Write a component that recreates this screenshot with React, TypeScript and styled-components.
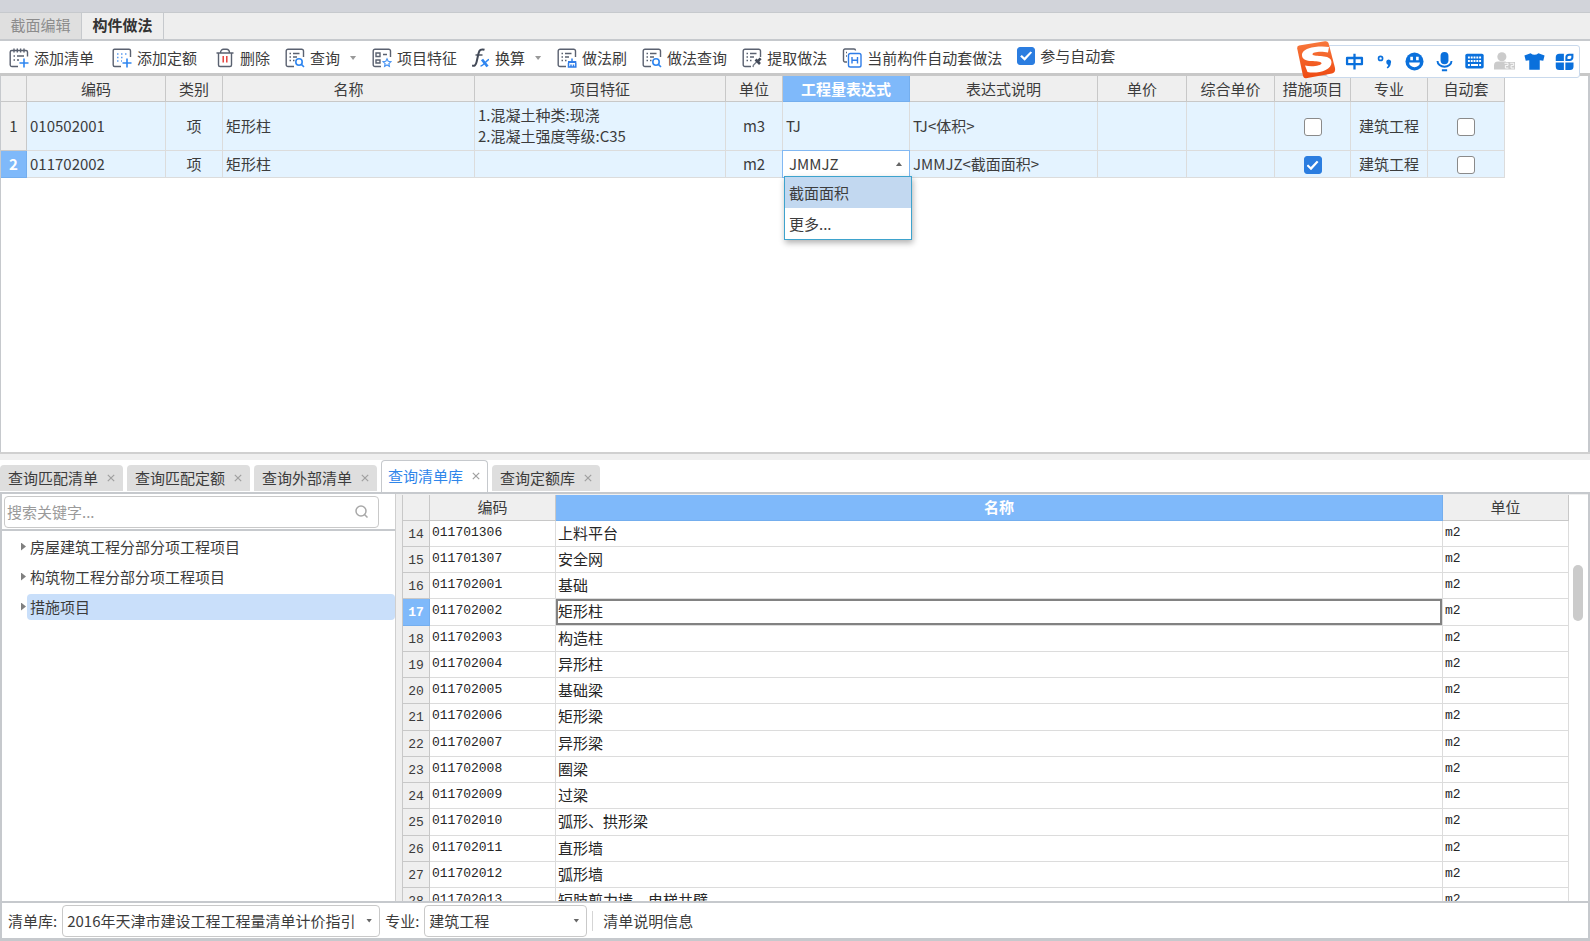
import React, { useState } from "react";
import styled, { createGlobalStyle, css } from "styled-components";

const GlobalStyle = createGlobalStyle`
  * { box-sizing: border-box; }
  body {
    margin: 0;
    background: #efefef;
    color: #3c3c3c;
    font: 15px/20px "Noto Sans CJK SC", sans-serif;
  }
  button, input, select { font: inherit; color: inherit; }
`;

const line = "#c6c9cd";
const grid = "#dcdcdc";
const headLine = "#c8c8c8";
const accent = "#7fb9fa";

const Window = styled.div`
  display: flex;
  flex-direction: column;
  height: 100vh;
  min-height: 640px;
  overflow: hidden;
`;

const TitleStrip = styled.div`
  flex: none;
  height: 12px;
  background: #d2d4da;
`;

const UpperPane = styled.section`
  flex: 442 1 0;
  min-height: 0;
  display: flex;
  flex-direction: column;
  border-bottom: 2px solid #d0d0d0;
`;

const PageTabs = styled.div`
  flex: none;
  display: flex;
  height: 29px;
  border-top: 1px solid ${line};
  border-bottom: 2px solid ${line};
  background: #eee;
`;

const PageTab = styled.button<{ $active?: boolean }>`
  width: 82px;
  padding: 0 0 2px;
  border: 0;
  border-right: 1px solid ${line};
  background: ${(p) => (p.$active ? "#eee" : "#dfdfdf")};
  color: ${(p) => (p.$active ? "#333" : "#8c8c8c")};
  font-weight: ${(p) => (p.$active ? 700 : 400)};
`;

const ToolbarRow = styled.div`
  position: relative;
  flex: none;
  display: flex;
  align-items: center;
  gap: 15px;
  height: 35px;
  padding: 0 9px;
  border-bottom: 3px solid ${headLine};
  background: #fff;
`;

const ToolGroup = styled.div`
  display: flex;
  gap: 18px;
`;

const ToolButton = styled.button`
  flex: none;
  display: flex;
  align-items: center;
  gap: 5px;
  padding: 2px 0 0;
  border: 0;
  background: none;
  white-space: nowrap;
`;

const Caret = styled.span<{ $up?: boolean; $dark?: boolean }>`
  flex: none;
  width: 8px;
  height: 4px;
  background: ${(p) => (p.$dark ? "#666" : "#999")};
  clip-path: ${(p) =>
    p.$up ? "polygon(12% 100%, 50% 0, 88% 100%)" : "polygon(12% 0, 88% 0, 50% 100%)"};
`;

const ToolCaret = styled(Caret)`
  margin-left: 4px;
`;

const CheckLabel = styled.label`
  flex: none;
  display: flex;
  align-items: center;
  gap: 5px;
  padding-bottom: 2px;
`;

const Check = styled.input.attrs({ type: "checkbox" })`
  appearance: none;
  display: inline-grid;
  place-items: center;
  width: 18px;
  height: 18px;
  margin: 0;
  border: 1px solid #8a8a8a;
  border-radius: 3px;
  background: #fff;
  vertical-align: middle;
  &:checked {
    border-color: #2b7de0;
    background: #2b7de0;
  }
  &:checked::after {
    content: "";
    width: 12px;
    height: 10px;
    background: #fff;
    clip-path: polygon(0 54%, 14% 40%, 36% 66%, 86% 4%, 100% 16%, 38% 98%);
  }
`;

const ImeBar = styled.div`
  position: absolute;
  z-index: 2;
  top: 4px;
  right: 10px;
  display: flex;
  align-items: center;
  gap: 6px;
  height: 33px;
  padding: 0 3px;
  border: 1px solid #c9d9ec;
  border-radius: 3px;
  background: #fff;
`;

const ImeLogo = styled.button`
  width: 40px;
  height: 40px;
  margin: 0 0 4px -34px;
  padding: 0;
  border: 0;
  background: none;
`;

const ImeButton = styled.button`
  display: grid;
  place-items: center;
  width: 24px;
  height: 24px;
  padding: 0;
  border: 0;
  background: none;
`;

const UpperBody = styled.div`
  flex: 1;
  min-height: 0;
  overflow: hidden;
  border: solid ${line};
  border-width: 0 2px 0 1px;
  background: #fff;
`;

const cell = css`
  height: 27px;
  border: solid ${grid};
  border-width: 0 1px 1px 0;
  font-weight: 400;
`;

const ItemTable = styled.table`
  width: 1504px;
  table-layout: fixed;
  border-collapse: separate;
  border-spacing: 0;
`;

const HeadCell = styled.th<{ $active?: boolean }>`
  ${cell}
  height: 26px;
  padding: 0;
  border-color: ${(p) => (p.$active ? "#74aeee" : headLine)};
  background: ${(p) => (p.$active ? accent : "#efefef")};
  color: ${(p) => (p.$active ? "#fff" : "inherit")};
  font-weight: ${(p) => (p.$active ? 700 : 400)};
`;

const RowHead = styled.th<{ $active?: boolean }>`
  ${cell}
  padding: 0;
  border-color: ${(p) => (p.$active ? "#74aeee" : headLine)};
  background: ${(p) => (p.$active ? accent : "#efefef")};
  color: ${(p) => (p.$active ? "#fff" : "inherit")};
  font-weight: ${(p) => (p.$active ? 700 : 400)};
`;

const ItemCell = styled.td<{ $center?: boolean }>`
  ${cell}
  padding: 0 3px;
  background: #e4f3ff;
  text-align: ${(p) => (p.$center ? "center" : "left")};
  white-space: nowrap;
`;

const FeatureText = styled.div`
  height: 48px;
  padding: 2px 0 4px;
  line-height: 21px;
  white-space: pre-line;
`;

const EditorCell = styled(ItemCell)`
  padding: 0;
  background: #fff;
`;

const Combo = styled.div`
  position: relative;
  display: flex;
  align-items: center;
  height: 26px;
  padding-right: 6px;
  box-shadow: 0 0 0 1px #82b8f2;
`;

const ComboInput = styled.input`
  flex: 1;
  min-width: 0;
  padding: 0 0 0 6px;
  border: 0;
  outline: 0;
  background: none;
`;

const ComboList = styled.div`
  position: absolute;
  z-index: 3;
  top: 25px;
  left: 1px;
  width: 128px;
  border: 1px solid #3ea3cd;
  background: #fff;
  box-shadow: 1px 3px 6px rgba(0, 0, 0, 0.3);
`;

const ComboOption = styled.button<{ $active?: boolean }>`
  display: block;
  width: 100%;
  height: 31px;
  padding: 0 4px;
  border: 0;
  background: ${(p) => (p.$active ? "#c2d8f0" : "#fff")};
  text-align: left;
`;

const LowerPane = styled.section`
  flex: 481 1 0;
  min-height: 0;
  display: flex;
  flex-direction: column;
  margin-top: 6px;
  border-bottom: 3px solid ${line};
  background: #fff;
`;

const QueryTabs = styled.div`
  flex: none;
  display: flex;
  align-items: flex-end;
  gap: 4px;
  height: 34px;
  border-bottom: 2px solid ${line};
`;

const QueryTab = styled.div<{ $active?: boolean }>`
  display: flex;
  align-items: center;
  gap: 6px;
  border-radius: 4px 4px 0 0;
  ${(p) =>
    p.$active
      ? css`
          height: 32px;
          padding: 0 4px 0 6px;
          border: 1px solid ${line};
          border-bottom: 0;
          background: #fff;
          color: #2f86ea;
        `
      : css`
          height: 26px;
          margin-bottom: 1px;
          padding: 0 5px 0 8px;
          background: #dedede;
        `}
`;

const TabName = styled.button`
  padding: 0;
  border: 0;
  background: none;
  white-space: nowrap;
`;

const TabClose = styled.button`
  display: grid;
  place-items: center;
  width: 14px;
  height: 16px;
  padding: 0;
  border: 0;
  background: none;
`;

const QueryBody = styled.div`
  flex: 1;
  min-height: 0;
  display: flex;
  border: solid ${line};
  border-width: 0 2px;
`;

const TreePane = styled.aside`
  flex: none;
  display: flex;
  flex-direction: column;
  width: 394px;
  border-right: 1px solid #cfcfcf;
`;

const SearchRow = styled.div`
  height: 37px;
  padding: 2px 16px 1px 2px;
  border-bottom: 2px solid ${line};
`;

const SearchBox = styled.label`
  display: flex;
  align-items: center;
  height: 32px;
  padding: 0 10px 0 2px;
  border: 1px solid #c9c9c9;
  border-radius: 4px;
`;

const SearchInput = styled.input`
  flex: 1;
  min-width: 0;
  padding: 0;
  border: 0;
  outline: 0;
  background: none;
  &::placeholder {
    color: #9a9a9a;
    opacity: 1;
  }
`;

const Tree = styled.ul`
  margin: 0;
  padding: 1px 0 0 18px;
  list-style: none;
`;

const TreeItem = styled.li`
  display: flex;
  align-items: center;
  height: 30px;
`;

const TreeArrow = styled.span`
  width: 5px;
  height: 8px;
  margin: 0 1px;
  background: #808080;
  clip-path: polygon(0 0, 100% 50%, 0 100%);
`;

const TreeLabel = styled.button<{ $active?: boolean }>`
  flex: 1;
  height: 26px;
  padding: 0 3px;
  border: 0;
  border-radius: 4px;
  background: ${(p) => (p.$active ? "#c9dffa" : "none")};
  text-align: left;
`;

const ListPane = styled.div`
  flex: 1;
  min-width: 0;
  display: flex;
  overflow: hidden;
  padding: 1px 0 0 6px;
  background: #efefef;
`;

const ListClip = styled.div`
  flex: 1;
  min-width: 0;
  overflow: hidden;
`;

const ListTable = styled.table`
  width: 100%;
  table-layout: fixed;
  border-collapse: separate;
  border-spacing: 0;
  border-left: 1px solid ${headLine};
  background: #fff;
`;

const ListRow = styled.tr`
  height: 26px;
  &:nth-child(4n) {
    height: 27px;
  }
`;

const mono = css`
  font-family: "Liberation Mono", "Noto Sans CJK SC", monospace;
  font-size: 13px;
`;

const ListHead = styled(RowHead)`
  height: auto;
  padding: 3px 0 0;
  ${mono}
`;

const ListCell = styled.td<{ $mono?: boolean; $selected?: boolean }>`
  padding: 0 2px;
  border: solid ${grid};
  border-width: 0 1px 1px 0;
  color: #262626;
  line-height: 18px;
  vertical-align: top;
  padding-top: 3px;
  white-space: nowrap;
  ${(p) => p.$mono && mono}
  ${(p) => p.$selected && "box-shadow: inset 0 0 0 2px #828282;"}
`;

const ScrollTrack = styled.div`
  flex: none;
  width: 19px;
  padding: 70px 5px 0 4px;
  background: #fff;
`;

const ScrollThumb = styled.div`
  height: 56px;
  border-radius: 5px;
  background: #cbcbcb;
`;

const Footer = styled.footer`
  flex: none;
  display: flex;
  align-items: center;
  height: 37px;
  padding-left: 6px;
  border: solid ${line};
  border-width: 2px 2px 0;
`;

const Field = styled.label`
  display: flex;
  align-items: center;
  gap: 5px;
  margin-right: 5px;
`;

const SelectBox = styled.span<{ $width: number }>`
  display: grid;
  grid-template-columns: 1fr 14px;
  align-items: center;
  width: ${(p) => p.$width}px;
  height: 32px;
  border: 1px solid #c9c9c9;
  border-radius: 4px;
  & > * {
    grid-row: 1;
  }
`;

const Select = styled.select`
  grid-column: 1 / 3;
  appearance: none;
  width: 100%;
  height: 30px;
  padding: 0 14px 0 4px;
  border: 0;
  outline: 0;
  background: none;
`;

const SelectCaret = styled(Caret)`
  grid-column: 2;
  pointer-events: none;
`;

const FooterInfo = styled.span`
  padding-left: 10px;
  border-left: 1px solid #d5d5d5;
`;

type IconName = "list" | "quota" | "trash" | "query" | "feature" | "fx" | "brush" | "search" | "pick" | "auto";

const Magnifier = () => (
  <g stroke="#2f86f0" strokeWidth="1.6" fill="#fff">
    <circle cx="14" cy="14" r="3.2" />
    <path d="M16.4 16.4 19 19" />
  </g>
);

const Lines = () => (
  <path d="M4.5 5.5h1.5M8 5.5h6.5M4.5 9h1.5M8 9h4M4.5 12.500h1.500M8 12.500h1.500" />
);

function ToolIcon({ name }: { name: IconName }) {
  const frame = <path d="M9 18.500H3A1.800 1.800 0 0 1 1.200 16.700V3A1.800 1.800 0 0 1 3 1.200H16.700A1.800 1.800 0 0 1 18.500 3V9" />;
  return (
    <svg width={name === "fx" ? 18 : 20} height="20" viewBox={name === "fx" ? "0 0 18 20" : "0 0 20 20"} fill="none" stroke="#5a6170" strokeWidth="1.400" aria-hidden="true">
      {name === "list" && (
        <>
          <path d="M9 18.500H2.800A1.600 1.600 0 0 1 1.200 17V4A1.600 1.600 0 0 1 2.800 2.500H17A1.600 1.600 0 0 1 18.500 4V8.500" />
          <path d="M5 .5v4M8.300 .5v4M11.600 .5v4M15 .5v4M4.500 8h1.500M8 8h7M4.500 12h1.500M8 12h2" />
          <path d="M15 10.500v9M10.500 15h9" stroke="#2f86f0" strokeWidth="1.600" />
        </>
      )}
      {name === "quota" && (
        <>
          <path d="M3.500 1.200H2.500A1.300 1.300 0 0 0 1.200 2.500V17A1.500 1.500 0 0 0 2.700 18.500H9M3 1.200H17A1.500 1.500 0 0 1 18.500 2.700V9" />
          <path d="M5 6h1.500M9 6h1.500M13 6h1.500M5 9.500h1.500M9 9.500h1.500M5 13h1.500M9 13h1" stroke="#5d9cf0" />
          <path d="M15 10.500v9M10.500 15h9" stroke="#2f86f0" strokeWidth="1.600" />
        </>
      )}
      {name === "trash" && (
        <>
          <path d="M1.500 5H18.500M3.500 5V17A1.500 1.500 0 0 0 5 18.500H15A1.500 1.500 0 0 0 16.500 17V5M5.500 5C5.500 2.500 7 1.200 8.500 1.200H11.500C13 1.200 14.500 2.500 14.500 5" />
          <path d="M8.200 8v6.500M11.800 8v6.500" stroke="#e5352f" />
        </>
      )}
      {(name === "query" || name === "search") && <>{frame}<Lines /><Magnifier /></>}
      {name === "feature" && (
        <>
          {frame}
          <path d="M4 5h4v3.500H4zM4 12h4v3H4zM11 6.500h4" />
          <path d="m15 10.800 1.200 2.500 2.700.4-2 1.900.5 2.700-2.400-1.300-2.400 1.300.5-2.700-2-1.900 2.700-.4z" stroke="#4b95f2" strokeWidth="1.200" />
        </>
      )}
      {name === "fx" && (
        <>
          <path d="M0 17.500c2.500 1 4-.5 4.700-4L6.500 5.500C7.300 2 9 .8 12.500 1.800" stroke="#434a58" strokeWidth="2" />
          <path d="M3.500 7H10.500" stroke="#434a58" />
          <path d="m10 11.500 5.500 7" stroke="#2f86f0" strokeWidth="2.800" />
          <path d="M17 11.500c-2 0-5.500 6.500-8.500 6.500" stroke="#2f86f0" strokeWidth="1.400" />
        </>
      )}
      {name === "brush" && (
        <>
          {frame}<Lines />
          <path d="M15 10.500v3.500M11.500 14.800V19h7.300v-4.200M14 19v-2.500M16.500 19v-2.500" stroke="#2f7de8" strokeWidth="1.500" />
          <path d="M11 14h8.300" stroke="#2f7de8" strokeWidth="2" />
        </>
      )}
      {name === "pick" && (
        <>
          {frame}<Lines />
          <path d="m11 19 .5-2 4-4" stroke="#7a808c" />
          <path d="m13.500 11.500 4.500 4.500M15.500 13.500l3.200-3.200" stroke="#434a58" strokeWidth="2.600" />
        </>
      )}
      {name === "auto" && (
        <>
          <path d="M5 14H3A1.500 1.500 0 0 1 1.500 12.500V2.500A1.500 1.500 0 0 1 3 1H12A1.500 1.500 0 0 1 13.500 2.500M4 4.500h1M4 8h1" />
          <rect x="6.500" y="5.500" width="12.500" height="13.500" rx="1.800" stroke="#2f7de8" />
          <path d="M10 9v6.500M15.500 9v6.500M10 12.200h5.500" stroke="#2f7de8" />
        </>
      )}
    </svg>
  );
}

const blue = "#0a70dc";

const imeIcons: { label: string; art: React.ReactNode }[] = [
  {
    label: "中文输入",
    art: <path d="M3.500 8H20.500V15H3.500zM12 3V21" fill="none" stroke={blue} strokeWidth="2.600" strokeLinejoin="round" />,
  },
  {
    label: "标点",
    art: (
      <>
        <circle cx="7.500" cy="8.500" r="2.300" fill="none" stroke={blue} strokeWidth="1.900" />
        <path d="M14 12.500a2.800 2.800 0 1 1 5.200 1.500q-.2 4-3.700 6l-1-1.200q1.500-1.200 1.800-2.800Q14 15.500 14 12.500" fill={blue} />
      </>
    ),
  },
  {
    label: "表情",
    art: (
      <>
        <circle cx="12" cy="12" r="10.300" fill={blue} />
        <path d="M7.200 6.500h3v4h-3zM13.800 6.500h3v4h-3zM5.800 13h12.400a6.200 5.600 0 0 1-12.400 0" fill="#fff" />
      </>
    ),
  },
  {
    label: "语音",
    art: (
      <>
        <rect x="7.500" y="1" width="9" height="14" rx="4.500" fill={blue} />
        <path d="M4 11.500a8 6.500 0 0 0 16 0M9 22h6" fill="none" stroke={blue} strokeWidth="2.200" />
      </>
    ),
  },
  {
    label: "键盘",
    art: (
      <>
        <rect x="1.500" y="3" width="21" height="17" rx="2" fill={blue} />
        <path d="M4.500 7.500h15M4.500 11.500h15" stroke="#fff" strokeWidth="2.400" strokeDasharray="2.200 1" />
        <path d="M4.500 16h2.200M8 16h8M17.300 16h2.200" stroke="#fff" strokeWidth="2.200" />
      </>
    ),
  },
  {
    label: "账号",
    art: (
      <>
        <circle cx="9" cy="6.500" r="5.200" fill="#cbcbcb" />
        <path d="M0 21v-4.500q0-4.500 4.500-4.500h9v9zM11 12.500h13V21H11z" fill="#cbcbcb" />
        <path d="M12 14h4v2.500h-3v3h3.500M18.500 14h4v2.500h-3v3h3.500" fill="none" stroke="#fff" />
      </>
    ),
  },
  {
    label: "皮肤",
    art: <path d="M7.500 2.500q4.500 3.500 9 0l7 2.500-1.500 6-4-.5V21.500H6V10.500l-4 .5L.5 5z" fill={blue} />,
  },
  {
    label: "工具箱",
    art: (
      <>
        <path d="M6 3h5.300v8.300H2V7a4 4 0 0 1 4-4M2 13h9.300v8.800H6A4 4 0 0 1 2 17.800zM13 13h9.300v4.800a4 4 0 0 1-4 4H13z" fill={blue} />
        <path d="M14.200 10.200V7.200A3 3 0 0 1 17.200 4.200H21V7.200A3 3 0 0 1 18 10.200z" fill="none" stroke={blue} strokeWidth="2.400" />
      </>
    ),
  },
];

function Ime() {
  return (
    <ImeBar>
      <ImeLogo aria-label="输入法">
        <svg width="40" height="40" viewBox="0 0 40 40">
          <defs>
            <linearGradient id="imeLogo" x1="0" y1="0" x2="0" y2="1">
              <stop offset="0" stopColor="#f8783c" />
              <stop offset="1" stopColor="#ee4a12" />
            </linearGradient>
          </defs>
          <path d="M3 5.500Q.8 6 1.200 8.500L7 36Q7.800 38.500 10 38.200L36 33.500Q39.800 32.500 39 28L32.500 3Q31.500 .8 29 1.200z" fill="url(#imeLogo)" />
          <path d="M33 7C24 5.500 5.500 7 6 15.500C6.500 24 24 19.500 25.500 23C26 26 15 27 9 25.500L11.500 32C20 34 36 31 35.500 22C35 13.500 18 17.500 16.500 14.500C16 11.500 26 11 32 12.500z" fill="#fff" />
        </svg>
      </ImeLogo>
      {imeIcons.map((i) => (
        <ImeButton key={i.label} aria-label={i.label}>
          <svg width="21" height="21" viewBox="0 0 24 24">{i.art}</svg>
        </ImeButton>
      ))}
    </ImeBar>
  );
}

const tools: { icon: IconName; text: string; menu?: boolean }[] = [
  { icon: "query", text: "查询", menu: true },
  { icon: "feature", text: "项目特征" },
  { icon: "fx", text: "换算", menu: true },
  { icon: "brush", text: "做法刷" },
  { icon: "search", text: "做法查询" },
  { icon: "pick", text: "提取做法" },
  { icon: "auto", text: "当前构件自动套做法" },
];

const columns: [string, number][] = [
  ["", 26],
  ["编码", 139],
  ["类别", 57],
  ["名称", 252],
  ["项目特征", 251],
  ["单位", 57],
  ["工程量表达式", 127],
  ["表达式说明", 188],
  ["单价", 89],
  ["综合单价", 88],
  ["措施项目", 76],
  ["专业", 77],
  ["自动套", 77],
];

const items = [
  { code: "010502001", features: "1.混凝土种类:现浇\n2.混凝土强度等级:C35", unit: "m3", expr: "TJ", note: "TJ<体积>", measure: false },
  { code: "011702002", features: "", unit: "m2", expr: "JMMJZ", note: "JMMJZ<截面面积>", measure: true },
];

const queryTabs = ["查询匹配清单", "查询匹配定额", "查询外部清单", "查询清单库", "查询定额库"];
const treeItems = ["房屋建筑工程分部分项工程项目", "构筑物工程分部分项工程项目", "措施项目"];

const library: [number, string, string][] = [
  [14, "011701306", "上料平台"],
  [15, "011701307", "安全网"],
  [16, "011702001", "基础"],
  [17, "011702002", "矩形柱"],
  [18, "011702003", "构造柱"],
  [19, "011702004", "异形柱"],
  [20, "011702005", "基础梁"],
  [21, "011702006", "矩形梁"],
  [22, "011702007", "异形梁"],
  [23, "011702008", "圈梁"],
  [24, "011702009", "过梁"],
  [25, "011702010", "弧形、拱形梁"],
  [26, "011702011", "直形墙"],
  [27, "011702012", "弧形墙"],
  [28, "011702013", "短肢剪力墙、电梯井壁"],
];

export default function App() {
  const [queryTab, setQueryTab] = useState("查询清单库");
  const [node, setNode] = useState("措施项目");
  const [picked, setPicked] = useState(17);

  return (
    <Window>
      <GlobalStyle />
      <TitleStrip />
      <UpperPane>
        <PageTabs>
          <PageTab>截面编辑</PageTab>
          <PageTab $active>构件做法</PageTab>
        </PageTabs>
        <ToolbarRow>
          <ToolGroup>
            <ToolButton><ToolIcon name="list" />添加清单</ToolButton>
            <ToolButton><ToolIcon name="quota" />添加定额</ToolButton>
            <ToolButton><ToolIcon name="trash" />删除</ToolButton>
          </ToolGroup>
          {tools.map((t) => (
            <ToolButton key={t.text}>
              <ToolIcon name={t.icon} />
              {t.text}
              {t.menu && <ToolCaret />}
            </ToolButton>
          ))}
          <CheckLabel>
            <Check defaultChecked />
            参与自动套
          </CheckLabel>
          <Ime />
        </ToolbarRow>
        <UpperBody>
          <ItemTable>
            <colgroup>
              {columns.map(([name, width]) => <col key={name} width={width} />)}
            </colgroup>
            <thead>
              <tr>
                {columns.map(([name]) => (
                  <HeadCell key={name} $active={name === "工程量表达式"}>{name}</HeadCell>
                ))}
              </tr>
            </thead>
            <tbody>
              {items.map((it, i) => (
                <tr key={it.code}>
                  <RowHead scope="row" $active={i === 1}>{i + 1}</RowHead>
                  <ItemCell>{it.code}</ItemCell>
                  <ItemCell $center>项</ItemCell>
                  <ItemCell>矩形柱</ItemCell>
                  <ItemCell>{it.features && <FeatureText>{it.features}</FeatureText>}</ItemCell>
                  <ItemCell $center>{it.unit}</ItemCell>
                  {i === 1 ? (
                    <EditorCell>
                      <Combo>
                        <ComboInput role="combobox" aria-label="工程量表达式" aria-expanded="true" aria-controls="exprOptions" defaultValue={it.expr} />
                        <Caret $up $dark />
                        <ComboList id="exprOptions" role="listbox">
                          <ComboOption role="option" aria-selected="true" $active>截面面积</ComboOption>
                          <ComboOption role="option" aria-selected="false">更多...</ComboOption>
                        </ComboList>
                      </Combo>
                    </EditorCell>
                  ) : (
                    <ItemCell>{it.expr}</ItemCell>
                  )}
                  <ItemCell>{it.note}</ItemCell>
                  <ItemCell />
                  <ItemCell />
                  <ItemCell $center><Check aria-label="措施项目" defaultChecked={it.measure} /></ItemCell>
                  <ItemCell $center>建筑工程</ItemCell>
                  <ItemCell $center><Check aria-label="自动套" /></ItemCell>
                </tr>
              ))}
            </tbody>
          </ItemTable>
        </UpperBody>
      </UpperPane>

      <LowerPane>
        <QueryTabs>
          {queryTabs.map((name) => (
            <QueryTab key={name} $active={name === queryTab}>
              <TabName onClick={() => setQueryTab(name)}>{name}</TabName>
              <TabClose aria-label={`关闭${name}`}>
                <svg width="8" height="8" viewBox="0 0 8 8" stroke="#a0a0a0" strokeWidth="1.200">
                  <path d="m.8 .8 6.400 6.400M7.200 .8.8 7.200" />
                </svg>
              </TabClose>
            </QueryTab>
          ))}
        </QueryTabs>
        <QueryBody>
          <TreePane>
            <SearchRow>
              <SearchBox>
                <SearchInput type="text" aria-label="搜索" placeholder="搜索关键字..." />
                <svg width="13" height="13" viewBox="0 0 13 13" fill="none" stroke="#a8a8a8" strokeWidth="1.500">
                  <circle cx="6" cy="6" r="5" />
                  <path d="m9.500 9.500 3 3" />
                </svg>
              </SearchBox>
            </SearchRow>
            <Tree>
              {treeItems.map((name) => (
                <TreeItem key={name}>
                  <TreeArrow />
                  <TreeLabel $active={name === node} onClick={() => setNode(name)}>{name}</TreeLabel>
                </TreeItem>
              ))}
            </Tree>
          </TreePane>
          <ListPane>
            <ListClip>
              <ListTable>
                <colgroup>
                  <col width={27} />
                  <col width={126} />
                  <col />
                  <col width={126} />
                </colgroup>
                <thead>
                  <tr>
                    <HeadCell />
                    <HeadCell>编码</HeadCell>
                    <HeadCell $active>名称</HeadCell>
                    <HeadCell>单位</HeadCell>
                  </tr>
                </thead>
                <tbody>
                  {library.map(([no, code, name]) => (
                    <ListRow key={no} onClick={() => setPicked(no)}>
                      <ListHead scope="row" $active={no === picked}>{no}</ListHead>
                      <ListCell $mono>{code}</ListCell>
                      <ListCell $selected={no === picked}>{name}</ListCell>
                      <ListCell $mono>m2</ListCell>
                    </ListRow>
                  ))}
                </tbody>
              </ListTable>
            </ListClip>
            <ScrollTrack>
              <ScrollThumb />
            </ScrollTrack>
          </ListPane>
        </QueryBody>
        <Footer>
          <Field>
            清单库:
            <SelectBox $width={318}>
              <Select>
                <option>2016年天津市建设工程工程量清单计价指引</option>
              </Select>
              <SelectCaret $dark />
            </SelectBox>
          </Field>
          <Field>
            专业:
            <SelectBox $width={163}>
              <Select>
                <option>建筑工程</option>
              </Select>
              <SelectCaret $dark />
            </SelectBox>
          </Field>
          <FooterInfo>清单说明信息</FooterInfo>
        </Footer>
      </LowerPane>
    </Window>
  );
}
